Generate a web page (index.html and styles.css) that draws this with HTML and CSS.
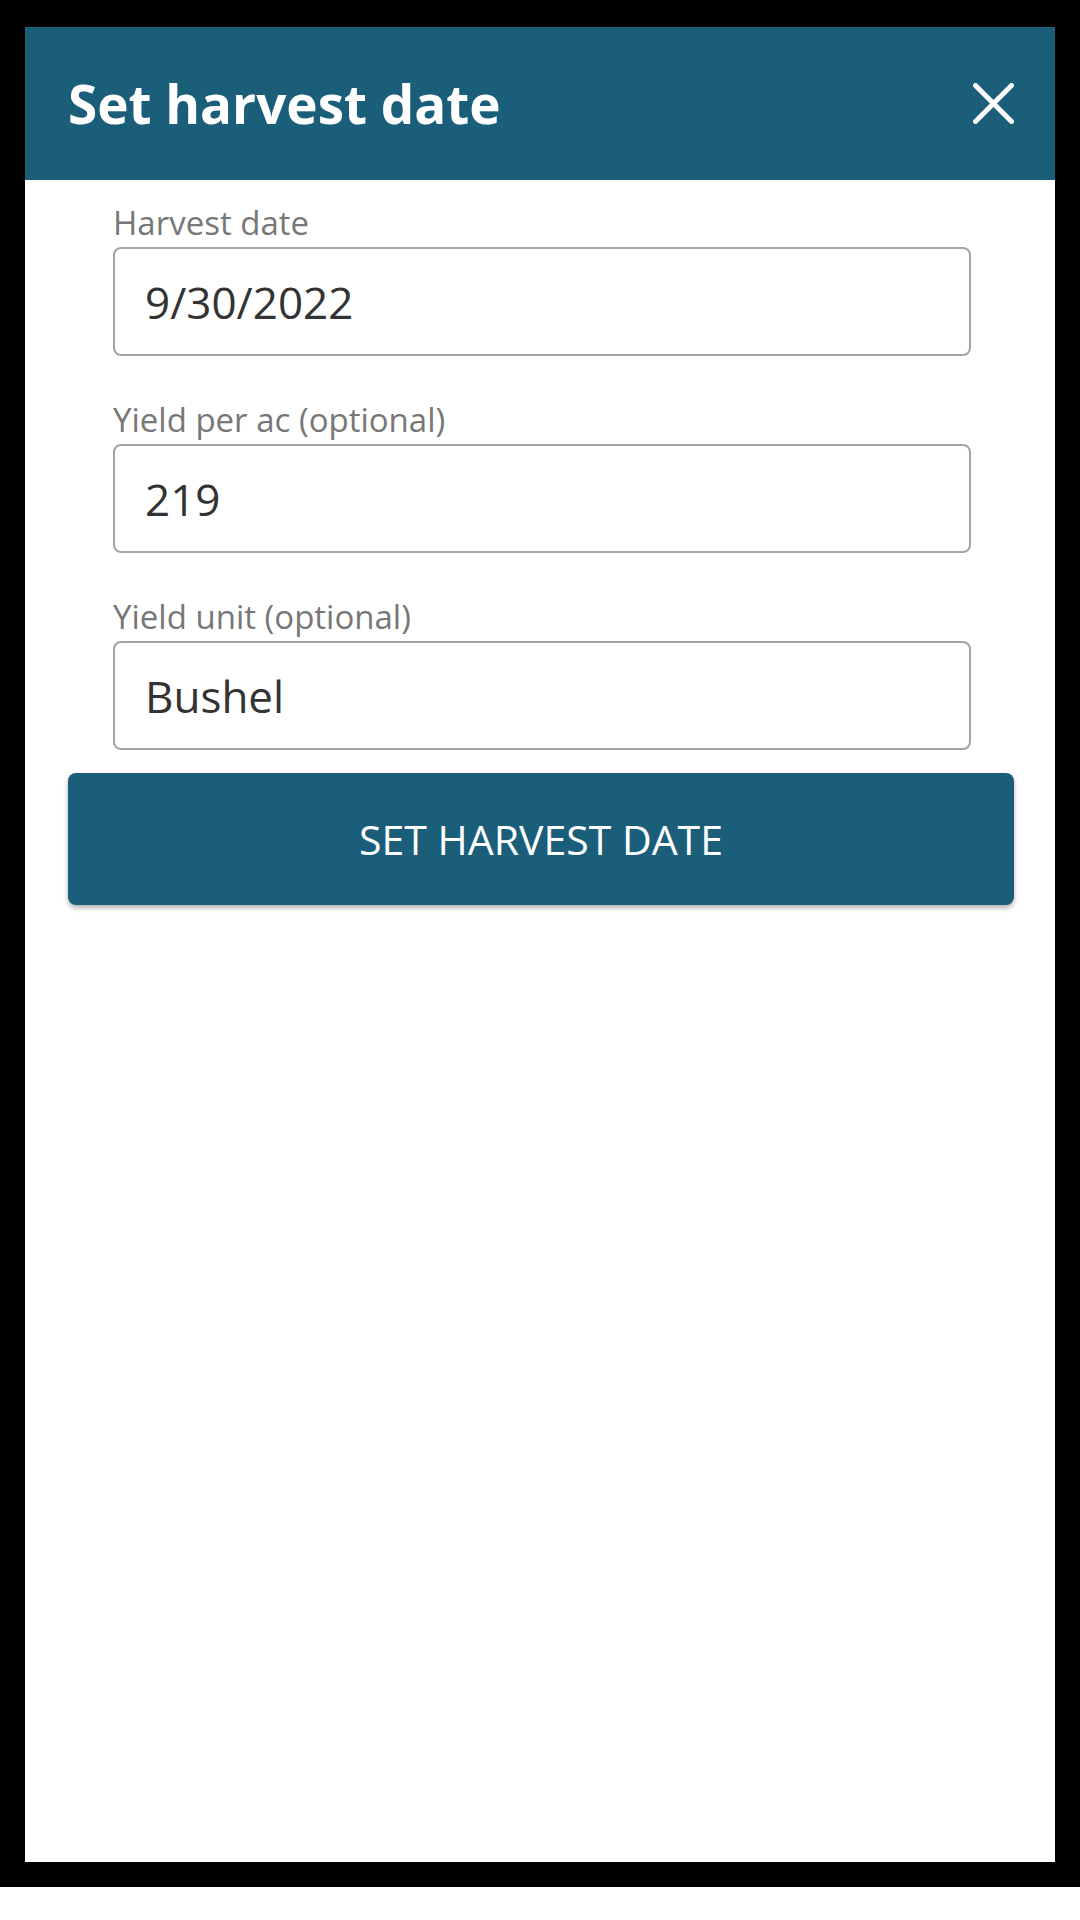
FILE: index.html
```html
<!DOCTYPE html>
<html lang="en">
<head>
    <meta charset="UTF-8">
    <meta name="viewport" content="width=device-width, initial-scale=1.0">
    <title>Set harvest date</title>
    <link rel="stylesheet" href="styles.css">
</head>
<body>

    <div class="device">
        <div class="screen">
            <div class="dialog-header">
                <h1>Set harvest date</h1>
                <button class="close-btn" aria-label="Close">
                    <svg width="41" height="41" viewBox="0 0 41 41">
                        <line x1="2.5" y1="2.5" x2="38.5" y2="38.5" />
                        <line x1="38.5" y1="2.5" x2="2.5" y2="38.5" />
                    </svg>
                </button>
            </div>

            <div class="dialog-body">
                <form class="harvest-form">
                    <div class="field">
                        <label for="harvest-date">Harvest date</label>
                        <input type="text" id="harvest-date" value="9/30/2022">
                    </div>
                    <div class="field">
                        <label for="yield">Yield per ac (optional)</label>
                        <input type="text" id="yield" value="219">
                    </div>
                    <div class="field">
                        <label for="yield-unit">Yield unit (optional)</label>
                        <input type="text" id="yield-unit" value="Bushel">
                    </div>
                </form>
                <button class="submit-btn" type="button">SET HARVEST DATE</button>
            </div>
        </div>
    </div>

</body>
</html>
```

FILE: styles.css
```css
body { margin: 0; background: #fff; font-family: "Open Sans", "Noto Sans", Arial, sans-serif; }

.device { background: #000; padding: 27px 25px 25px; }
.screen { background: #fff; height: 1835px; }

.dialog-header { display: flex; align-items: center; justify-content: space-between; height: 153px; padding: 0 41px 0 43px; background: #1a5e79; }
.dialog-header h1 { margin: 0; color: #fff; font-size: 53px; font-weight: 700; }
.close-btn { display: flex; padding: 0; border: none; background: none; cursor: pointer; }
.close-btn line { stroke: #fff; stroke-width: 5; stroke-linecap: round; }

.dialog-body { padding: 23px 41px 0 43px; }
.harvest-form { display: flex; flex-direction: column; gap: 44px; padding: 0 43px 0 45px; }
.field { display: flex; flex-direction: column; }
.field label { font-size: 33px; line-height: 40px; color: #777; margin-bottom: 4px; }
.field input { box-sizing: border-box; width: 100%; height: 109px; padding: 0 30px; border: 2px solid #a3a3a3; border-radius: 8px; font-family: inherit; font-size: 44px; color: #333; background: #fff; outline: none; }

.submit-btn { display: block; width: 100%; height: 132px; margin-top: 23px; border: none; border-radius: 8px; background: #1a5e79; color: #fff; font-family: inherit; font-size: 41px; box-shadow: 0 3px 5px rgba(0, 0, 0, 0.3); cursor: pointer; }
```
